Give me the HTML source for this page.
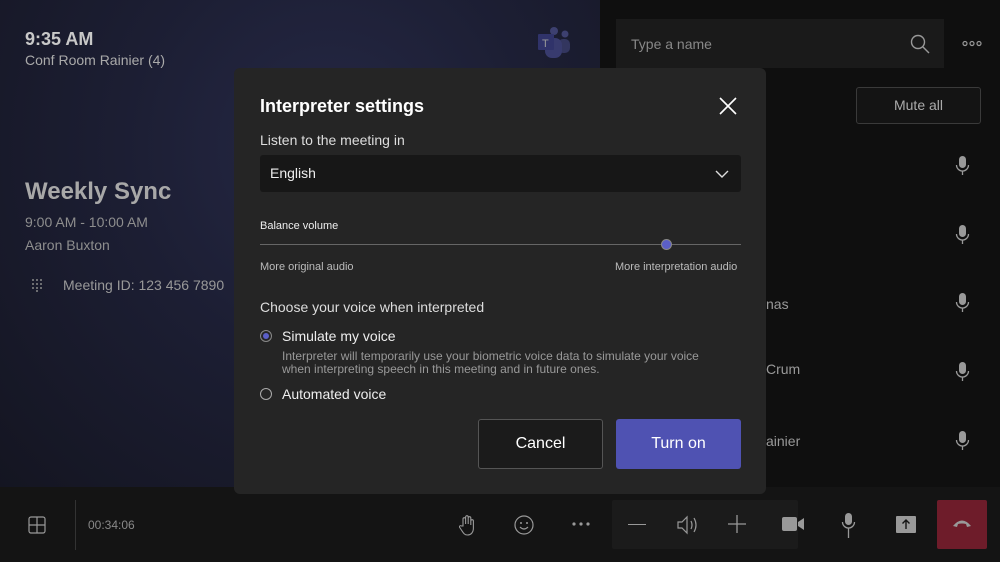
<!DOCTYPE html>
<html><head><meta charset="utf-8"><style>
*{margin:0;padding:0;box-sizing:border-box}
body{width:1000px;height:562px;overflow:hidden;background:#111;font-family:"Liberation Sans",sans-serif;position:relative;color:#ddd}
.abs{position:absolute}
#left{left:0;top:0;width:600px;height:490px;background:radial-gradient(ellipse at 55% 30%,#252845 0%,#1c1e33 45%,#141521 100%)}
#right{left:600px;top:0;width:400px;height:490px;background:#0f0f0f}
#bar{left:0;top:487px;width:1000px;height:75px;background:#141414}
.t{position:absolute;white-space:nowrap}
#dlg{left:234px;top:68px;width:532px;height:426px;background:#252525;border-radius:6px}
.mic{position:absolute;left:955px}
</style></head><body>
<div id="left" class="abs"></div>
<div id="right" class="abs"></div>
<div id="bar" class="abs"></div>

<div class="t" style="left:25px;top:29px;font-size:18px;font-weight:bold;color:#c8c8c8">9:35 AM</div>
<div class="t" style="left:25px;top:52px;font-size:14px;color:#aaa">Conf Room Rainier (4)</div>
<svg class="abs" style="left:536px;top:26px" width="36" height="34" viewBox="0 0 36 34"><circle cx="18" cy="5" r="4" fill="#3d4070"/><circle cx="29" cy="8" r="3.5" fill="#3d4070"/><rect x="22" y="13" width="12" height="14" rx="5" fill="#33365f"/><rect x="9" y="12" width="17" height="20" rx="7" fill="#383b6e"/><rect x="2" y="8" width="16" height="16" rx="1" fill="#30336a"/><text x="6" y="21" font-size="11" fill="#999" font-family="Liberation Sans">T</text></svg>
<div class="t" style="left:25px;top:178px;font-size:24px;font-weight:bold;color:#a8a8a8">Weekly Sync</div>
<div class="t" style="left:25px;top:214px;font-size:14px;color:#8e8e8e">9:00 AM - 10:00 AM</div>
<div class="t" style="left:25px;top:237px;font-size:14px;color:#8e8e8e">Aaron Buxton</div>
<svg class="abs" style="left:31px;top:278px" width="12" height="14"><g fill="#888"><circle cx="2" cy="2" r="1"/><circle cx="6" cy="2" r="1"/><circle cx="10" cy="2" r="1"/><circle cx="2" cy="6" r="1"/><circle cx="6" cy="6" r="1"/><circle cx="10" cy="6" r="1"/><circle cx="2" cy="10" r="1"/><circle cx="6" cy="10" r="1"/><circle cx="10" cy="10" r="1"/><circle cx="6" cy="13" r="1"/></g></svg>
<div class="t" style="left:63px;top:277px;font-size:14px;color:#999">Meeting ID: 123 456 7890</div>

<div class="abs" style="left:616px;top:19px;width:328px;height:49px;background:#1a1a1a"></div>
<div class="t" style="left:631px;top:36px;font-size:14px;color:#888">Type a name</div>
<svg class="abs" style="left:910px;top:34px" width="20" height="20"><circle cx="8" cy="8" r="6.5" stroke="#999" stroke-width="1.4" fill="none"/><line x1="13" y1="13" x2="19" y2="19" stroke="#999" stroke-width="1.4"/></svg>
<svg class="abs" style="left:962px;top:40px" width="20" height="8"><g stroke="#999" stroke-width="1.2" fill="none"><circle cx="3" cy="3.5" r="2"/><circle cx="10" cy="3.5" r="2"/><circle cx="17" cy="3.5" r="2"/></g></svg>
<div class="abs" style="left:856px;top:87px;width:125px;height:37px;border:1px solid #3a3a3a;border-radius:3px;background:#141414"></div>
<div class="t" style="left:856px;top:97px;width:125px;text-align:center;font-size:14px;color:#aaa">Mute all</div>
<div class="t" style="left:766px;top:296px;font-size:14px;color:#999">nas</div>
<div class="t" style="left:766px;top:361px;font-size:14px;color:#999">Crum</div>
<div class="t" style="left:766px;top:433px;font-size:14px;color:#999">ainier</div>
<svg width="0" height="0" style="position:absolute"><defs><g id="m"><rect x="4" y="0" width="7" height="12" rx="3.5" fill="#999"/><path d="M1.5 9a6 6 0 0 0 12 0M7.5 15v4" stroke="#999" stroke-width="1.3" fill="none"/></g></defs></svg>
<svg class="mic" style="top:156px" width="15" height="20"><use href="#m"/></svg>
<svg class="mic" style="top:225px" width="15" height="20"><use href="#m"/></svg>
<svg class="mic" style="top:293px" width="15" height="20"><use href="#m"/></svg>
<svg class="mic" style="top:362px" width="15" height="20"><use href="#m"/></svg>
<svg class="mic" style="top:431px" width="15" height="20"><use href="#m"/></svg>

<div id="dlg" class="abs"></div>
<div class="t" style="left:260px;top:96px;font-size:18px;font-weight:bold;color:#fff">Interpreter settings</div>
<svg class="abs" style="left:719px;top:97px" width="18" height="18"><path d="M1 1L17 17M17 1L1 17" stroke="#fff" stroke-width="1.6"/></svg>
<div class="t" style="left:260px;top:132px;font-size:14px;color:#ddd">Listen to the meeting in</div>
<div class="abs" style="left:260px;top:155px;width:481px;height:37px;background:#171717;border-radius:3px"></div>
<div class="t" style="left:270px;top:165px;font-size:14px;color:#eee">English</div>
<svg class="abs" style="left:715px;top:170px" width="14" height="9"><path d="M1 1L7 7L13 1" stroke="#ddd" stroke-width="1.4" fill="none"/></svg>
<div class="t" style="left:260px;top:220px;font-size:11px;color:#eee">Balance volume</div>
<div class="abs" style="left:260px;top:244px;width:481px;height:1px;background:#666"></div>
<div class="abs" style="left:661px;top:239px;width:11px;height:11px;border-radius:50%;background:#5b5fc7;border:1.5px solid #888"></div>
<div class="t" style="left:260px;top:261px;font-size:11px;color:#bbb">More original audio</div>
<div class="t" style="left:615px;top:261px;font-size:11px;color:#bbb">More interpretation audio</div>
<div class="t" style="left:260px;top:299px;font-size:14px;color:#ddd">Choose your voice when interpreted</div>
<div class="abs" style="left:260px;top:330px;width:12px;height:12px;border-radius:50%;border:1px solid #888;background:#252525"><div style="margin:2px;width:6px;height:6px;border-radius:50%;background:#5b5fc7"></div></div>
<div class="t" style="left:282px;top:328px;font-size:14px;color:#eee">Simulate my voice</div>
<div class="t" style="left:282px;top:350px;font-size:12px;line-height:13px;color:#999">Interpreter will temporarily use your biometric voice data to simulate your voice<br>when interpreting speech in this meeting and in future ones.</div>
<div class="abs" style="left:260px;top:388px;width:12px;height:12px;border-radius:50%;border:1px solid #aaa"></div>
<div class="t" style="left:282px;top:386px;font-size:14px;color:#eee">Automated voice</div>
<div class="abs" style="left:478px;top:419px;width:125px;height:50px;border:1px solid #555;border-radius:3px;background:#1b1b1b"></div>
<div class="t" style="left:478px;top:435px;width:125px;text-align:center;font-size:16px;color:#fff">Cancel</div>
<div class="abs" style="left:616px;top:419px;width:125px;height:50px;border-radius:3px;background:#4f52b2"></div>
<div class="t" style="left:616px;top:435px;width:125px;text-align:center;font-size:16px;color:#fff">Turn on</div>

<svg class="abs" style="left:28px;top:516px" width="18" height="18"><rect x="1" y="1" width="16" height="16" rx="2" stroke="#999" stroke-width="1.2" fill="none"/><path d="M9 1v16M1 9h16" stroke="#999" stroke-width="1.2"/></svg>
<div class="abs" style="left:75px;top:500px;width:1px;height:50px;background:#333"></div>
<div class="t" style="left:88px;top:518px;font-size:12px;color:#888">00:34:06</div>
<svg class="abs" style="left:459px;top:514px" width="18" height="22"><path d="M4 12V5a1.3 1.3 0 0 1 2.6 0v5V3a1.3 1.3 0 0 1 2.6 0v7V4a1.3 1.3 0 0 1 2.6 0v7V7a1.3 1.3 0 0 1 2.6 0v7c0 4-2 7-6 7-3 0-4-2-6-5l-2-3a1.2 1.2 0 0 1 2-1z" stroke="#999" stroke-width="1.1" fill="none"/></svg>
<svg class="abs" style="left:514px;top:514px" width="20" height="22"><circle cx="10" cy="11" r="9" stroke="#999" stroke-width="1.2" fill="none"/><circle cx="7" cy="9" r="1" fill="#999"/><circle cx="13" cy="9" r="1" fill="#999"/><path d="M6 13q4 4 8 0" stroke="#999" stroke-width="1.2" fill="none"/></svg>
<svg class="abs" style="left:571px;top:521px" width="20" height="6"><g fill="#999"><circle cx="3" cy="3" r="1.6"/><circle cx="10" cy="3" r="1.6"/><circle cx="17" cy="3" r="1.6"/></g></svg>
<div class="abs" style="left:612px;top:500px;width:186px;height:49px;background:#1b1b1b;border-radius:2px"></div>
<div class="abs" style="left:628px;top:524px;width:18px;height:1.3px;background:#999"></div>
<svg class="abs" style="left:675px;top:513px" width="24" height="24"><path d="M3 9h4l5-5v16l-5-5H3z" stroke="#999" stroke-width="1.2" fill="none"/><path d="M16 8q2 4 0 8M19 5q4 7 0 14" stroke="#999" stroke-width="1.2" fill="none"/></svg>
<svg class="abs" style="left:727px;top:514px" width="20" height="20"><path d="M10 1v18M1 10h18" stroke="#999" stroke-width="1.3"/></svg>
<svg class="abs" style="left:782px;top:515px" width="24" height="18"><rect x="0" y="2" width="15" height="14" rx="2" fill="#999"/><path d="M16 7l6-4v12l-6-4z" fill="#999"/></svg>
<svg class="abs" style="left:841px;top:513px" width="15" height="26"><use href="#m"/><path d="M7.5 19v6" stroke="#999" stroke-width="1.3"/></svg>
<svg class="abs" style="left:896px;top:516px" width="20" height="17"><rect x="0" y="0" width="20" height="17" rx="1" fill="#999"/><path d="M10 13V4M6.5 7.5L10 4l3.5 3.5" stroke="#141414" stroke-width="1.4" fill="none"/></svg>
<div class="abs" style="left:937px;top:500px;width:50px;height:49px;background:#6e1c2a;border-radius:2px"></div>
<svg class="abs" style="left:952px;top:518px" width="20" height="10"><path d="M1 8q9-11 18 0l-4 1-1-3q-4-1-8 0l-1 3z" fill="#999"/></svg>
</body></html>
